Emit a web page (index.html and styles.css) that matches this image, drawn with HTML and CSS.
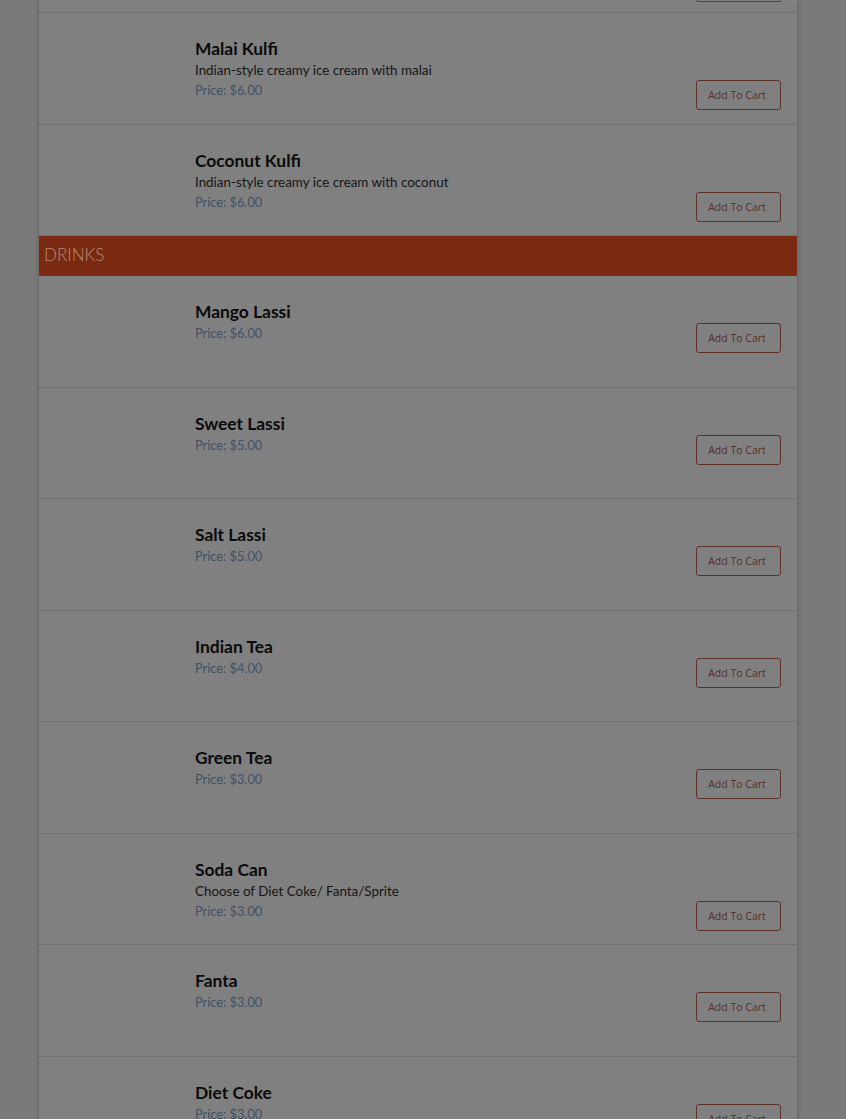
FILE: index.html
```html
<!DOCTYPE html>
<html lang="en">
<head>
<meta charset="utf-8">
<title>Menu</title>
<link rel="stylesheet" href="styles.css">
</head>
<body>
<div class="menu">
  <div class="strip"><span class="btn-edge"></span></div>
  <div class="item">
    <div class="thumb"></div>
    <div class="info">
      <h3 class="name">Malai Kulfi</h3>
      <p class="desc">Indian-style creamy ice cream with malai</p>
      <div class="row"><span class="price">Price: $6.00</span><button class="btn">Add To Cart</button></div>
    </div>
  </div>
  <div class="item">
    <div class="thumb"></div>
    <div class="info">
      <h3 class="name">Coconut Kulfi</h3>
      <p class="desc">Indian-style creamy ice cream with coconut</p>
      <div class="row"><span class="price">Price: $6.00</span><button class="btn">Add To Cart</button></div>
    </div>
  </div>
  <div class="category">DRINKS</div>
  <div class="item">
    <div class="thumb"></div>
    <div class="info">
      <h3 class="name">Mango Lassi</h3>
      <div class="row"><span class="price">Price: $6.00</span><button class="btn">Add To Cart</button></div>
    </div>
  </div>
  <div class="item">
    <div class="thumb"></div>
    <div class="info">
      <h3 class="name">Sweet Lassi</h3>
      <div class="row"><span class="price">Price: $5.00</span><button class="btn">Add To Cart</button></div>
    </div>
  </div>
  <div class="item">
    <div class="thumb"></div>
    <div class="info">
      <h3 class="name">Salt Lassi</h3>
      <div class="row"><span class="price">Price: $5.00</span><button class="btn">Add To Cart</button></div>
    </div>
  </div>
  <div class="item">
    <div class="thumb"></div>
    <div class="info">
      <h3 class="name">Indian Tea</h3>
      <div class="row"><span class="price">Price: $4.00</span><button class="btn">Add To Cart</button></div>
    </div>
  </div>
  <div class="item">
    <div class="thumb"></div>
    <div class="info">
      <h3 class="name">Green Tea</h3>
      <div class="row"><span class="price">Price: $3.00</span><button class="btn">Add To Cart</button></div>
    </div>
  </div>
  <div class="item">
    <div class="thumb"></div>
    <div class="info">
      <h3 class="name">Soda Can</h3>
      <p class="desc">Choose of Diet Coke/ Fanta/Sprite</p>
      <div class="row"><span class="price">Price: $3.00</span><button class="btn">Add To Cart</button></div>
    </div>
  </div>
  <div class="item">
    <div class="thumb"></div>
    <div class="info">
      <h3 class="name">Fanta</h3>
      <div class="row"><span class="price">Price: $3.00</span><button class="btn">Add To Cart</button></div>
    </div>
  </div>
  <div class="item">
    <div class="thumb"></div>
    <div class="info">
      <h3 class="name">Diet Coke</h3>
      <div class="row"><span class="price">Price: $3.00</span><button class="btn">Add To Cart</button></div>
    </div>
  </div>
</div>
</body>
</html>
```

FILE: styles.css
```css
html, body {
  margin: 0;
  padding: 0;
}
body {
  background: #7a7a7a;
  font-family: Lato, "Noto Sans", sans-serif;
  overflow: hidden;
}
.menu {
  width: 758px;
  margin-left: 39px;
  background: #808080;
  box-shadow: 0 0 5px rgba(0, 0, 0, 0.22);
}
.strip {
  box-sizing: border-box;
  height: 13px;
  padding-right: 16px;
  display: flex;
  justify-content: flex-end;
  align-items: flex-start;
  border-bottom: 1px solid #737373;
}
.btn-edge {
  box-sizing: border-box;
  width: 85px;
  height: 2px;
  border: 1px solid #6a3a30;
  border-top: 0;
  border-radius: 0 0 3px 3px;
}
.item {
  display: flex;
  box-sizing: border-box;
  height: 111.5px;
  padding: 25px 16px 0 0;
  border-bottom: 1px solid #737373;
}
.thumb {
  flex: none;
  width: 156px;
}
.info {
  flex: 1;
  display: flex;
  flex-direction: column;
}
.name {
  margin: 0;
  font-size: 17.4px;
  line-height: 22px;
  font-weight: 700;
  color: #0a0a0a;
}
.desc {
  margin: 0;
  font-size: 13.4px;
  line-height: 20px;
  color: #151515;
}
.row {
  display: flex;
  justify-content: space-between;
  align-items: flex-start;
}
.price {
  font-size: 12.8px;
  line-height: 20px;
  color: #3f5169;
}
.btn {
  box-sizing: border-box;
  width: 85px;
  height: 30px;
  padding: 0 3px 0 0;
  border: 1px solid #5f3026;
  border-radius: 3px;
  background: transparent;
  color: #562f26;
  font-family: "Open Sans", sans-serif;
  font-size: 10.5px;
}
.category {
  height: 40px;
  padding-left: 5px;
  line-height: 38px;
  background: #7a2a10;
  color: #b68a7c;
  font-size: 17px;
  font-weight: 300;
}
```
